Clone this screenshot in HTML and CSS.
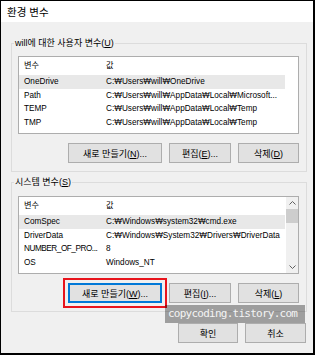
FILE: index.html
```html
<!DOCTYPE html>
<html lang="ko">
<head>
<meta charset="utf-8">
<title>환경 변수</title>
<link rel="stylesheet" href="styles.css">
</head>
<body>
<div class="window">
  <div class="titlebar">환경 변수</div>
  <div class="content">
    <fieldset class="group">
      <legend>will에 대한 사용자 변수(<u>U</u>)</legend>
      <div class="list">
        <div class="table">
          <div class="row head"><span class="c1">변수</span><span class="c2">값</span></div>
          <div class="row sel"><span class="c1">OneDrive</span><span class="c2">C:₩Users₩will₩OneDrive</span></div>
          <div class="row"><span class="c1">Path</span><span class="c2">C:₩Users₩will₩AppData₩Local₩Microsoft...</span></div>
          <div class="row"><span class="c1">TEMP</span><span class="c2">C:₩Users₩will₩AppData₩Local₩Temp</span></div>
          <div class="row"><span class="c1">TMP</span><span class="c2">C:₩Users₩will₩AppData₩Local₩Temp</span></div>
        </div>
      </div>
      <div class="buttons">
        <button class="btn btn-new">새로 만들기(<u>N</u>)...</button>
        <button class="btn btn-edit">편집(<u>E</u>)...</button>
        <button class="btn btn-del">삭제(<u>D</u>)</button>
      </div>
    </fieldset>
    <fieldset class="group">
      <legend>시스템 변수(<u>S</u>)</legend>
      <div class="list list-sys">
        <div class="table">
          <div class="row head"><span class="c1">변수</span><span class="c2">값</span></div>
          <div class="row sel"><span class="c1">ComSpec</span><span class="c2">C:₩Windows₩system32₩cmd.exe</span></div>
          <div class="row"><span class="c1">DriverData</span><span class="c2">C:₩Windows₩System32₩Drivers₩DriverData</span></div>
          <div class="row"><span class="c1 tight">NUMBER_OF_PRO...</span><span class="c2">8</span></div>
          <div class="row"><span class="c1">OS</span><span class="c2">Windows_NT</span></div>
        </div>
        <div class="scrollbar">
          <div class="sb-arrow"><svg width="7" height="4" viewBox="0 0 7 4"><path d="M0.5 3.5 L3.5 0.5 L6.5 3.5" fill="none" stroke="#606060" stroke-width="1"/></svg></div>
          <div class="sb-thumb"></div>
          <div class="sb-track"></div>
          <div class="sb-arrow"><svg width="7" height="4" viewBox="0 0 7 4"><path d="M0.5 0.5 L3.5 3.5 L6.5 0.5" fill="none" stroke="#606060" stroke-width="1"/></svg></div>
        </div>
      </div>
      <div class="buttons">
        <button class="btn btn-new focus">새로 만들기(<u>W</u>)...</button>
        <button class="btn btn-edit">편집(<u>I</u>)...</button>
        <button class="btn btn-del">삭제(<u>L</u>)</button>
      </div>
    </fieldset>
    <div class="footer">
      <button class="btn btn-ok">확인</button>
      <button class="btn btn-cancel">취소</button>
    </div>
  </div>
  <div class="watermark">copycoding.tistory.com</div>
</div>
</body>
</html>
```
FILE: styles.css
```css
html, body {
  margin: 0;
  padding: 0;
}
body {
  width: 315px;
  height: 355px;
  overflow: hidden;
  font-family: "Liberation Sans", "Noto Sans CJK KR", sans-serif;
  font-size: 9px;
  color: #000;
}
.window {
  position: relative;
  box-sizing: border-box;
  width: 315px;
  height: 355px;
  border: solid #000;
  border-width: 1px 2px 2px 1px;
  background: #f0f0f0;
}
.titlebar {
  height: 21px;
  background: #fff;
  padding-left: 6px;
  font-family: "Noto Sans CJK KR", sans-serif;
  font-size: 10.5px;
  line-height: 21px;
}
.content {
  padding: 15px 6px 0 10px;
}
.group {
  margin: 0;
  padding: 0 7px 8px 2px;
  border: 1px solid #dcdcdc;
  min-width: 0;
}
.group + .group {
  margin-top: 4px;
}
.group legend {
  padding: 0 1px;
  height: 12px;
  line-height: 12px;
}
.list {
  margin: 7px 0 0 4px;
  height: 78px;
  box-sizing: border-box;
  border: 1px solid #adadad;
  background: #fff;
  display: flex;
  overflow: hidden;
  font-size: 8.2px;
}
.list-sys {
  margin-top: 8px;
}
.table {
  width: 266px;
  flex: none;
}
.row {
  display: flex;
  height: 13.5px;
  line-height: 13.5px;
  white-space: nowrap;
}
.row.head {
  height: 18px;
  line-height: 18px;
}
.row.sel {
  background: #e8e8e8;
}
.c1 {
  width: 82px;
  flex: none;
  box-sizing: border-box;
  padding-left: 5px;
  overflow: hidden;
}
.c1.tight {
  letter-spacing: -0.45px;
}
.c2 {
  flex: 1;
  padding-left: 5px;
  overflow: hidden;
}
.scrollbar {
  margin-left: auto;
  width: 12px;
  background: #f0f0f0;
  display: flex;
  flex-direction: column;
}
.sb-arrow {
  height: 12px;
  display: flex;
  align-items: center;
  justify-content: center;
}
.sb-arrow svg {
  display: block;
}
.sb-thumb {
  height: 14px;
  background: #cdcdcd;
}
.sb-track {
  flex: 1;
}
.buttons {
  display: flex;
  justify-content: flex-end;
  gap: 7px;
  margin-top: 9px;
}
.btn {
  height: 20px;
  box-sizing: border-box;
  border: 1px solid #adadad;
  background: #e1e1e1;
  font: inherit;
  color: #000;
  padding: 0;
  margin: 0;
}
.btn-new { width: 94px; }
.btn-edit { width: 62px; }
.btn-del { width: 61px; }
.btn.focus {
  border-color: #0078d7;
  box-shadow: inset 0 0 0 1px #0078d7;
  outline: 2px solid #e8141c;
  outline-offset: 3px;
}
.footer {
  display: flex;
  justify-content: flex-end;
  gap: 7px;
  margin-top: 11px;
  padding-right: 1px;
}
.btn-ok { width: 60px; }
.btn-cancel { width: 61px; }
.watermark {
  position: absolute;
  left: 164px;
  top: 304px;
  width: 140px;
  height: 18px;
  box-sizing: border-box;
  padding-left: 3px;
  background: rgba(0, 0, 0, 0.34);
  color: #f4f4f4;
  font-family: "DejaVu Sans Mono", monospace;
  font-size: 11px;
  letter-spacing: -0.75px;
  line-height: 18px;
  white-space: nowrap;
}
```
